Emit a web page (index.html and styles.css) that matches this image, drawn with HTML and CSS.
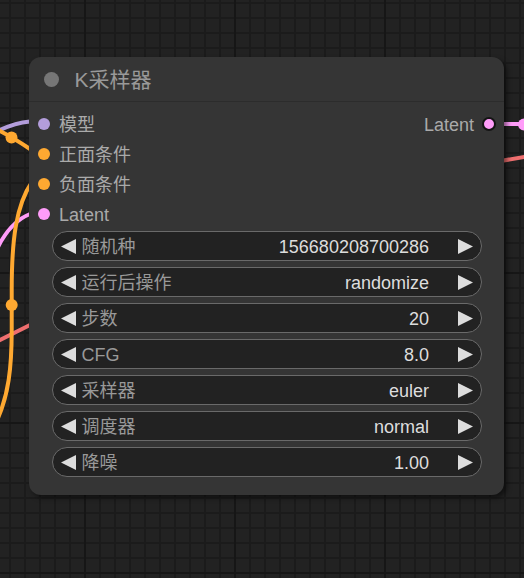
FILE: index.html
```html
<!DOCTYPE html>
<html lang="zh">
<head>
<meta charset="utf-8">
<title>K采样器</title>
<link rel="stylesheet" href="styles.css">
</head>
<body>
<div class="canvas">
  <svg class="links" width="524" height="578" viewBox="0 0 524 578" aria-hidden="true">
    <path class="link vae" d="M -4 342 L 44 318"/>
    <path class="link latent" d="M -3 249 Q 10 222 30 214 L 44 214"/>
    <path class="link model" d="M 0 130 Q 15 123 30 121.5 L 44 122"/>
    <path class="link cond" d="M -2 130 Q 12 137 30 149 L 44 154"/>
    <path class="link cond" d="M -2 418 C 8 395, 11.7 370, 11.7 330 L 11.7 290 C 11.7 240, 16 205, 32 182 L 44 184"/>
    <circle class="knot cond-fill" cx="11.5" cy="137.5" r="6"/>
    <circle class="knot cond-fill" cx="11.7" cy="305" r="6"/>
    <path class="link latent" d="M 489 124 L 530 124"/>
    <circle class="knot latent-fill" cx="524" cy="124.5" r="6"/>
    <path class="link vae" d="M 480 164.5 L 530 156"/>
  </svg>

  <div class="node">
    <div class="node-title">
      <span class="title-dot"></span>
      <span class="title-text">K采样器</span>
    </div>

    <div class="slots">
      <div class="slot-row">
        <div class="slot-in"><span class="dot model-fill"></span><span class="slot-label">模型</span></div>
        <div class="slot-out"><span class="slot-label">Latent</span><span class="dot out latent-fill"></span></div>
      </div>
      <div class="slot-row">
        <div class="slot-in"><span class="dot cond-fill"></span><span class="slot-label">正面条件</span></div>
      </div>
      <div class="slot-row">
        <div class="slot-in"><span class="dot cond-fill"></span><span class="slot-label">负面条件</span></div>
      </div>
      <div class="slot-row">
        <div class="slot-in"><span class="dot latent-fill"></span><span class="slot-label">Latent</span></div>
      </div>
    </div>

    <div class="widgets">
      <div class="widget">
        <svg class="arrow" width="15" height="15" viewBox="0 0 15 15"><path d="M15 0 L0 7.5 L15 15 Z"/></svg>
        <span class="w-label">随机种</span>
        <span class="w-value">156680208700286</span>
        <svg class="arrow" width="15" height="15" viewBox="0 0 15 15"><path d="M0 0 L15 7.5 L0 15 Z"/></svg>
      </div>
      <div class="widget">
        <svg class="arrow" width="15" height="15" viewBox="0 0 15 15"><path d="M15 0 L0 7.5 L15 15 Z"/></svg>
        <span class="w-label">运行后操作</span>
        <span class="w-value">randomize</span>
        <svg class="arrow" width="15" height="15" viewBox="0 0 15 15"><path d="M0 0 L15 7.5 L0 15 Z"/></svg>
      </div>
      <div class="widget">
        <svg class="arrow" width="15" height="15" viewBox="0 0 15 15"><path d="M15 0 L0 7.5 L15 15 Z"/></svg>
        <span class="w-label">步数</span>
        <span class="w-value">20</span>
        <svg class="arrow" width="15" height="15" viewBox="0 0 15 15"><path d="M0 0 L15 7.5 L0 15 Z"/></svg>
      </div>
      <div class="widget">
        <svg class="arrow" width="15" height="15" viewBox="0 0 15 15"><path d="M15 0 L0 7.5 L15 15 Z"/></svg>
        <span class="w-label">CFG</span>
        <span class="w-value">8.0</span>
        <svg class="arrow" width="15" height="15" viewBox="0 0 15 15"><path d="M0 0 L15 7.5 L0 15 Z"/></svg>
      </div>
      <div class="widget">
        <svg class="arrow" width="15" height="15" viewBox="0 0 15 15"><path d="M15 0 L0 7.5 L15 15 Z"/></svg>
        <span class="w-label">采样器</span>
        <span class="w-value">euler</span>
        <svg class="arrow" width="15" height="15" viewBox="0 0 15 15"><path d="M0 0 L15 7.5 L0 15 Z"/></svg>
      </div>
      <div class="widget">
        <svg class="arrow" width="15" height="15" viewBox="0 0 15 15"><path d="M15 0 L0 7.5 L15 15 Z"/></svg>
        <span class="w-label">调度器</span>
        <span class="w-value">normal</span>
        <svg class="arrow" width="15" height="15" viewBox="0 0 15 15"><path d="M0 0 L15 7.5 L0 15 Z"/></svg>
      </div>
      <div class="widget">
        <svg class="arrow" width="15" height="15" viewBox="0 0 15 15"><path d="M15 0 L0 7.5 L15 15 Z"/></svg>
        <span class="w-label">降噪</span>
        <span class="w-value">1.00</span>
        <svg class="arrow" width="15" height="15" viewBox="0 0 15 15"><path d="M0 0 L15 7.5 L0 15 Z"/></svg>
      </div>
    </div>
  </div>
</div>
</body>
</html>
```

FILE: styles.css
```css
html, body {
  margin: 0;
  padding: 0;
}

body {
  width: 524px;
  height: 578px;
  overflow: hidden;
  font-family: "Liberation Sans", Arial, "Noto Sans CJK SC", sans-serif;
  background-color: #222222;
  background-image:
    linear-gradient(to right, #161616 2px, transparent 2px),
    linear-gradient(to bottom, #161616 2px, transparent 2px),
    linear-gradient(to right, #1b1b1b 2px, transparent 2px),
    linear-gradient(to bottom, #1b1b1b 2px, transparent 2px);
  background-size: 150px 150px, 150px 150px, 15px 15px, 15px 15px;
  background-position: 84px 0, 0 122px, 9px 0, 0 2px;
}

.canvas {
  position: relative;
  width: 524px;
  height: 578px;
  padding-top: 57px;
  box-sizing: border-box;
}

.links {
  position: absolute;
  left: 0;
  top: 0;
  z-index: 0;
}

.link {
  fill: none;
  stroke-width: 4;
  stroke-linecap: round;
}

.link.model { stroke: #b39ddb; }
.link.cond { stroke: #ffa931; }
.link.latent { stroke: #ff9cf9; }
.link.vae { stroke: #ef6f6f; }

.knot.cond-fill { fill: #ffa931; }
.knot.latent-fill { fill: #ff9cf9; }

.node {
  position: relative;
  z-index: 1;
  width: 475px;
  height: 438px;
  margin-left: 29px;
  background: #353535;
  border-radius: 12px;
  box-shadow: 3px 3px 5px rgba(0, 0, 0, 0.5);
  box-sizing: border-box;
  padding-bottom: 18px;
}

.node-title {
  height: 45px;
  box-sizing: border-box;
  border-bottom: 1px solid #2c2c2c;
  display: flex;
  align-items: center;
}

.title-dot {
  width: 15px;
  height: 15px;
  border-radius: 50%;
  background: #767676;
  margin-left: 15px;
}

.title-text {
  margin-left: 15.5px;
  font-size: 21px;
  line-height: 45px;
  color: #999999;
  padding-top: 1px;
}

.slots {
  padding-top: 7px;
}

.slot-row {
  height: 30px;
  display: flex;
  align-items: center;
  justify-content: space-between;
  padding: 0 8px 0 9px;
}

.slot-in, .slot-out {
  display: flex;
  align-items: center;
  height: 30px;
}

.dot {
  width: 12px;
  height: 12px;
  border-radius: 50%;
  flex: none;
}

.dot.out {
  width: 14px;
  height: 14px;
  box-sizing: border-box;
  border: 2px solid #141414;
}

.model-fill { background: #b39ddb; }
.cond-fill { background: #ffa931; }
.latent-fill { background: #ff9cf9; }

.slot-label {
  font-size: 18px;
  line-height: 30px;
  color: #aaaaaa;
  padding-top: 1px;
}

.slot-in .slot-label { margin-left: 9px; }
.slot-out .slot-label { margin-right: 8px; }

.widgets {
  margin-top: 2px;
  padding: 0 22.5px;
  display: flex;
  flex-direction: column;
  gap: 6px;
}

.widget {
  height: 30px;
  box-sizing: border-box;
  border: 1px solid #6a6a6a;
  border-radius: 15px;
  background: #222222;
  display: flex;
  align-items: center;
  padding: 0 8px;
  font-size: 18px;
  line-height: 28px;
}

.arrow {
  flex: none;
  fill: #dddddd;
}

.w-label {
  margin-left: 6px;
  color: #999999;
  flex: 1;
  padding-top: 1px;
}

.w-value {
  color: #dddddd;
  margin-right: 28.5px;
  padding-top: 1px;
}
```
